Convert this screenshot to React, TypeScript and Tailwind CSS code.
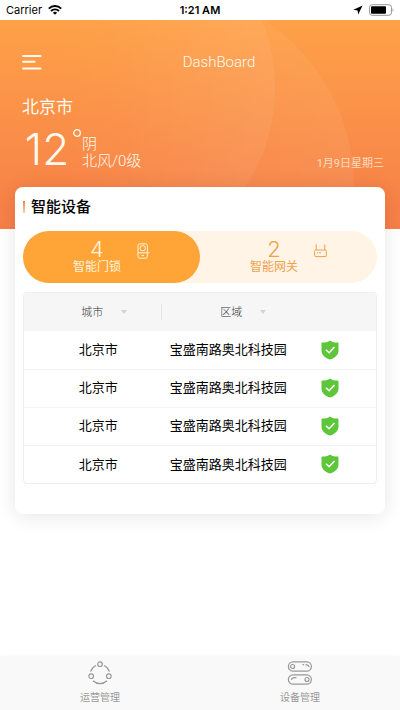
import { useState } from 'react'
import clsx from 'clsx'

type DeviceTab = 'lock' | 'gateway'

const DEVICES = [
  { id: 1, city: '北京市', area: '宝盛南路奥北科技园' },
  { id: 2, city: '北京市', area: '宝盛南路奥北科技园' },
  { id: 3, city: '北京市', area: '宝盛南路奥北科技园' },
  { id: 4, city: '北京市', area: '宝盛南路奥北科技园' },
]

function LockIcon() {
  return (
    <svg width="13" height="16" viewBox="0 0 13 16" fill="none" stroke="currentColor" strokeWidth="1">
      <rect x="1" y="0.8" width="9.4" height="14.4" rx="1.8" />
      <circle cx="5.7" cy="5.2" r="2.7" />
      <path d="M1 9.8h11.5M4.4 12.4h2.6" />
    </svg>
  )
}

function RouterIcon() {
  return (
    <svg width="13" height="16" viewBox="0 0 13 16" fill="none" stroke="currentColor" strokeWidth="1">
      <rect x="0.6" y="7" width="11.8" height="6.6" rx="1.4" />
      <path d="M2.2 1.4V7M10.8 1.4V7M3 9.8h1M5 9.8h2" />
    </svg>
  )
}

function ShieldIcon() {
  return (
    <svg width="18" height="20" viewBox="0 0 18 20" className="mx-auto" role="img" aria-label="正常">
      <path d="M9 .4C10 1.5 13.6 2.6 16.4 2.5c.7 0 1.1.4 1.1 1v7c0 4.6-3.9 7.6-8.5 9.1C4.4 18.1.5 15.1.5 10.5v-7c0-.6.4-1 1.1-1C4.4 2.6 8 1.5 9 .4z" fill="#5dc63a" />
      <path d="M4.9 9.7l3.2 3.1 5.4-5.7" fill="none" stroke="#fff" strokeWidth="1.5" />
    </svg>
  )
}

function OperationIcon() {
  return (
    <svg width="26" height="26" viewBox="0 0 26 26" fill="none" stroke="#999" strokeWidth="1.2">
      <circle cx="13" cy="4.2" r="2.3" />
      <circle cx="4.2" cy="16.2" r="2.3" />
      <circle cx="21.8" cy="16.2" r="2.3" />
      <path d="M8.9 5.5A10 10 0 0 0 3.6 11.7M17.1 5.5A10 10 0 0 1 22.4 11.7M6 20.7A10 10 0 0 0 20 20.7" />
    </svg>
  )
}

function DeviceIcon() {
  return (
    <svg width="26" height="26" viewBox="0 0 26 26" fill="none" stroke="#999" strokeWidth="1.2">
      <rect x="1.4" y="1.8" width="23" height="9.4" rx="4.7" />
      <rect x="1.4" y="14.8" width="23" height="9.4" rx="4.7" />
      <circle cx="5.6" cy="6.5" r="2" />
      <circle cx="20" cy="19.5" r="2" />
      <path d="M15.5 4.6h1.6M18.6 4.6c1.8 0 3 .8 3.4 2.4M4.4 19.8c.3-1.5 1.3-2.2 3-2.2h2" />
    </svg>
  )
}

function StatusBar() {
  return (
    <div className="grid h-5 grid-cols-3 items-center bg-white px-1.5 font-[Inter,sans-serif] text-[11px] text-black">
      <div className="flex items-center gap-1.5">
        <span>Carrier</span>
        <svg width="14" height="10" viewBox="0 0 14 10" fill="none" stroke="#000" strokeWidth="1.9">
          <path d="M.8 3.6a8.8 8.8 0 0 1 12.4 0M3 6a5.7 5.7 0 0 1 8 0" />
          <path d="M7 9.8L4.9 7.7a3 3 0 0 1 4.2 0z" fill="#000" stroke="none" />
        </svg>
      </div>
      <span className="text-center font-semibold">1:21 AM</span>
      <div className="flex items-center justify-end gap-1.5">
        <svg width="10" height="10" viewBox="0 0 10 10">
          <path d="M9.6.4L.4 4.8l4.2.6.6 4.2z" />
        </svg>
        <svg width="25" height="12" viewBox="0 0 25 12">
          <rect x=".5" y=".7" width="22" height="10.6" rx="2.6" fill="none" stroke="#999" />
          <rect x="2" y="2.2" width="15" height="7.6" rx="1" />
          <path d="M23.6 4.2c1.2.5 1.2 3.1 0 3.6z" fill="#999" />
        </svg>
      </div>
    </div>
  )
}

function FilterSelect({ label }: { label: string }) {
  return (
    <div className="relative flex w-[46px] items-center">
      <select aria-label={label} className="w-full appearance-none bg-transparent pr-4 text-[11px] font-light text-[#333] outline-none">
        <option>{label}</option>
      </select>
      <svg width="6" height="4" viewBox="0 0 6 4" className="pointer-events-none absolute right-0">
        <path d="M0 0h6L3 4z" fill="#d4d4d4" />
      </svg>
    </div>
  )
}

export default function App() {
  const [tab, setTab] = useState<DeviceTab>('lock')

  const tabs = [
    { key: 'lock' as const, count: 4, label: '智能门锁', icon: <LockIcon /> },
    { key: 'gateway' as const, count: 2, label: '智能网关', icon: <RouterIcon /> },
  ]

  return (
    <div className="flex min-h-screen flex-col bg-white font-['Liberation_Sans','Noto_Sans_CJK_SC',sans-serif]">
      <StatusBar />

      <header className="relative h-[209px] overflow-hidden bg-linear-to-b from-[#fea148] to-[#f67e48] text-[#fffaf0]">
        <svg className="absolute inset-0 h-full w-full" viewBox="0 0 400 209" preserveAspectRatio="xMidYMid slice" aria-hidden="true">
          <defs>
            <linearGradient id="glow" x1="0" x2="1" y1="0" y2="0">
              <stop offset="0.4" stopColor="#fff" stopOpacity="0" />
              <stop offset="1" stopColor="#fff" stopOpacity="0.06" />
            </linearGradient>
          </defs>
          <circle cx="97" cy="68" r="178" fill="url(#glow)" />
          <circle cx="154" cy="167" r="200" fill="url(#glow)" />
        </svg>

        <div className="relative pr-4 pl-[22px]">
          <div className="grid grid-cols-[1fr_auto_1fr] items-center pt-7">
            <button type="button" aria-label="菜单" className="h-7 w-5">
              <svg width="20" height="16" viewBox="0 0 20 16" stroke="currentColor" strokeWidth="2" strokeLinecap="round">
                <path d="M1 2h17.5M1 7.8h11.5M1 14.5h17.5" />
              </svg>
            </button>
            <h1 className="pl-8 font-['Roboto',sans-serif] text-[15px] leading-6 font-light">DashBoard</h1>
          </div>

          <p className="mt-5 text-[17px] leading-6">北京市</p>
          <div className="flex items-start">
            <span className="w-[50px] text-center font-[Inter,sans-serif] text-[44px] leading-[58px] font-light">12</span>
            <svg width="10" height="10" viewBox="0 0 10 10" className="mt-2">
              <circle cx="5" cy="5" r="3.3" fill="none" stroke="currentColor" strokeWidth="1.3" />
            </svg>
            <div className="mt-4 font-['Roboto','Noto_Sans_CJK_SC',sans-serif] text-[15px] leading-[17px] font-light">
              <p>阴</p>
              <p>北风/0级</p>
            </div>
            <time className="mt-9 ml-auto font-['Roboto','Noto_Sans_CJK_SC',sans-serif] text-[11px] leading-4 text-[#ffdcc0]">1月9日星期三</time>
          </div>
        </div>
      </header>

      <main className="relative mx-[15px] -mt-[42px] rounded-lg bg-white px-2 pt-2 pb-[30px] shadow-[0_2px_20px_rgba(0,0,0,0.1)]">
        <h2 className="flex h-6 items-center gap-1.5 text-[15px] font-medium text-black">
          <span className="h-3 w-0.5 bg-linear-to-b from-[#f0804a] to-[#fbd0b0]" />
          智能设备
        </h2>

        <div className="mt-3 flex h-[52px] rounded-full bg-[#fff4e6]">
          {tabs.map((t) => (
            <button
              key={t.key}
              type="button"
              onClick={() => setTab(t.key)}
              aria-pressed={tab === t.key}
              className={clsx(
                'flex flex-1 items-start justify-center gap-4 rounded-full',
                tab === t.key ? 'bg-[#ffa538] text-[#fff3dc]' : 'text-[#f0a04a]'
              )}
            >
              <span className="flex flex-col items-center pt-2">
                <span className="font-[Inter,sans-serif] text-[22px] leading-5 font-light">{t.count}</span>
                <span className="text-[12px] leading-4">{t.label}</span>
              </span>
              <span className="pt-3">{t.icon}</span>
            </button>
          ))}
        </div>

        <div className="mt-[9px] overflow-hidden rounded border border-[#eee]">
          <table className="w-full table-fixed border-collapse text-[13px] text-black">
            <colgroup>
              <col className="w-[41%]" />
              <col className="w-[34%]" />
              <col className="w-[25%]" />
            </colgroup>
            <thead>
              <tr className="h-[38px] bg-[#f6f6f6]">
                <th scope="col" className="p-0">
                  <div className="mr-1.5 flex justify-end border-r border-[#e6e6e6] pr-[34px]">
                    <FilterSelect label="城市" />
                  </div>
                </th>
                <th scope="col" colSpan={2} className="p-0 pl-[52px]">
                  <FilterSelect label="区域" />
                </th>
              </tr>
            </thead>
            <tbody>
              {DEVICES.map((d) => (
                <tr key={d.id} className="h-[38px] border-b border-[#f3f3f3] last:border-b-0">
                  <td className="p-0 pl-1 text-center">{d.city}</td>
                  <td className="p-0 text-center whitespace-nowrap">{d.area}</td>
                  <td className="p-0 pr-1"><ShieldIcon /></td>
                </tr>
              ))}
            </tbody>
          </table>
        </div>
      </main>

      <nav className="mt-auto grid h-[52px] grid-cols-2 bg-[#f9f9f9] text-[10px] text-[#999] shadow-[0_-1px_4px_rgba(0,0,0,0.05)]">
        <a href="#operation" className="flex flex-col items-center gap-1 pt-0.5">
          <OperationIcon />
          <span>运营管理</span>
        </a>
        <a href="#device" className="flex flex-col items-center gap-1 pt-0.5">
          <DeviceIcon />
          <span>设备管理</span>
        </a>
      </nav>
    </div>
  )
}
